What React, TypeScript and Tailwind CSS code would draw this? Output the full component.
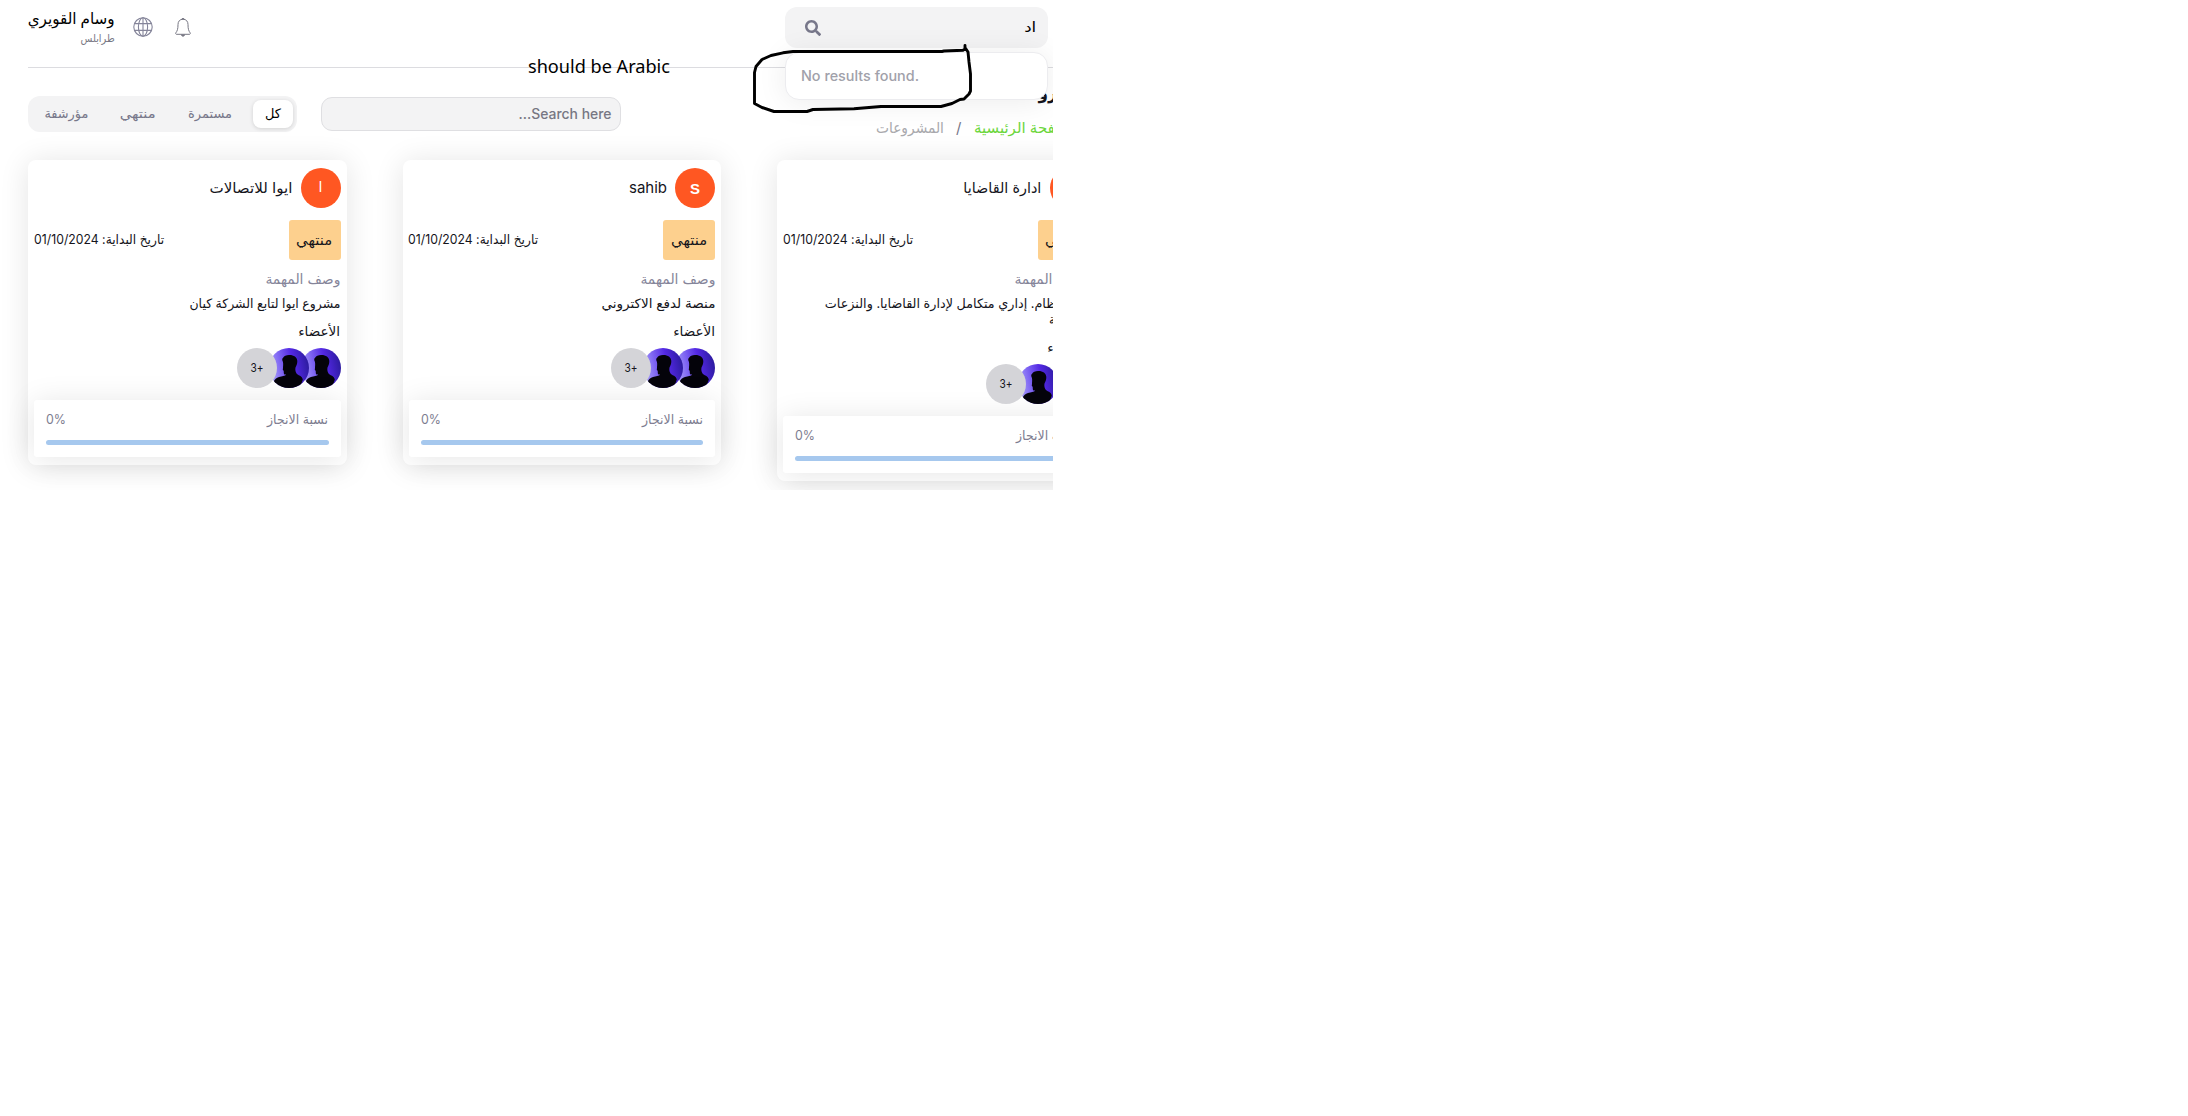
import { useLayoutEffect, useRef, useState } from "react";
import { FaSearch } from "react-icons/fa";

type FitProps = { text: string; className: string; ltr?: boolean };

/** A single line of text, condensed or widened to fill its box. */
function Fit({ text, className, ltr }: FitProps) {
  const box = useRef<HTMLSpanElement>(null);
  const line = useRef<HTMLSpanElement>(null);
  const [ratio, setRatio] = useState(1);
  useLayoutEffect(() => {
    if (box.current && line.current) {
      setRatio(box.current.clientWidth / line.current.getBoundingClientRect().width);
    }
  }, []);
  return (
    <span ref={box} dir={ltr ? "ltr" : "rtl"} className={`block shrink-0 whitespace-nowrap ${className}`}>
      <span
        ref={line}
        className={ltr ? "inline-block origin-left" : "inline-block origin-right"}
        style={{ transform: `scaleX(${ratio})` }}
      >
        {text}
      </span>
    </span>
  );
}

function Globe() {
  return (
    <svg viewBox="0 0 20 20" className="size-5 text-[#85859a]" fill="none" stroke="currentColor" strokeWidth="1.1">
      <circle cx="10" cy="10" r="9.2" />
      <ellipse cx="10" cy="10" rx="4.6" ry="9.2" />
      <path d="M10 .8v18.4M1.7 6.6h16.6M1.7 13.4h16.6" />
    </svg>
  );
}

function Bell() {
  return (
    <svg viewBox="0 0 16 19" className="h-[19px] w-4 text-[#777783]" fill="none" stroke="currentColor" strokeWidth="1">
      <path d="M8 1.2c-3.3 0-5 2.4-5 5.3 0 4.6-.7 6.4-2.2 8.4-.4.7-.1 1.4.7 1.4h13c.8 0 1.1-.7.7-1.4C13.7 12.9 13 11.1 13 6.5c0-2.9-1.7-5.3-5-5.3Z" />
      <path d="M6.8 1.4a1.2 1 0 0 1 2.4 0M6.3 17h3.4L8 18.4Z" fill="currentColor" />
    </svg>
  );
}

function Member({ id }: { id: string }) {
  return (
    <svg viewBox="0 0 40 40" className="size-10 shrink-0 rounded-full">
      <defs>
        <linearGradient id={id} x1="0" y1=".6" x2="1" y2=".4">
          <stop offset="0" stopColor="#b0a6fb" />
          <stop offset=".3" stopColor="#8068f3" />
          <stop offset=".62" stopColor="#5328e4" />
          <stop offset="1" stopColor="#2c1b9e" />
        </linearGradient>
      </defs>
      <rect width="40" height="40" fill={`url(#${id})`} />
      <path
        fill="#04030a"
        d="M13.8 13.5c-1-1.5-.6-3.3.5-3.9.6-1.6 3-2.5 5.7-2.5 4.5-.2 8.2 2 8.3 6 .1 2.5-.8 4.5-1.8 6.4-.3 1.8-.2 3.5.5 5 .8 1.8 2.3 2.5 4 3.3 1.5.8 2.3 2 2.8 3.7L31 40H8l-3.5-6c1-2.8 3-4.2 5.5-5 3-1 6-.8 7.3-2.5-1.8.3-2.5-.2-2.5-1.8l-.1-2-.9-.6.2-2.3c0-1.8.5-3.6-.2-6.3Z"
      />
    </svg>
  );
}

type Card = {
  id: string;
  title: string;
  titleWidth: string;
  initial: string;
  latin?: boolean;
  lines: { text: string; width: string }[];
};

const cards: Card[] = [
  {
    id: "a",
    title: "ايوا للاتصالات",
    titleWidth: "w-[83px]",
    initial: "ا",
    lines: [{ text: "مشروع ايوا لتابع الشركة كيان", width: "w-[151px]" }],
  },
  {
    id: "b",
    title: "sahib",
    titleWidth: "w-[38px]",
    initial: "S",
    latin: true,
    lines: [{ text: "منصة لدفع الاكتروني", width: "w-[114px]" }],
  },
  {
    id: "c",
    title: "ادارة القاضايا",
    titleWidth: "w-[78px]",
    initial: "ا",
    lines: [
      { text: "هذا نظام. إداري متكامل لإدارة القاضايا. والنزعات", width: "mr-[9px] w-[256px]" },
      { text: "القانونية", width: "w-[41px]" },
    ],
  },
];

function ProjectCard({ card }: { card: Card }) {
  return (
    <article className="flex w-[318.500px] shrink-0 flex-col rounded-lg bg-white px-1.5 py-2 text-[#15151c] shadow-[0_2px_30px_rgba(0,0,0,0.11)]">
      <div className="flex h-10 items-center justify-end gap-2">
        <Fit text={card.title} ltr={card.latin} className={`text-[15px] leading-5 ${card.titleWidth}`} />
        <span
          className={`flex size-10 items-center justify-center rounded-full bg-[#ff5722] text-white ${
            card.latin ? "pt-0.5 font-[Liberation_Sans] text-[15px] font-bold" : "pb-1 text-[14px]"
          }`}
        >
          {card.initial}
        </span>
      </div>
      <div className="mt-3 flex h-10 items-center justify-between">
        <Fit text="تاريخ البداية: 01/10/2024" className="w-[130px] pb-0.5 text-[13px] leading-5" />
        <span className="flex h-10 w-[52px] items-center justify-center rounded-[3px] bg-[#fdd08e]">
          <Fit text="منتهي" className="w-9 text-[14px] leading-5" />
        </span>
      </div>
      <div className="mt-[9px] flex flex-col items-end">
        <Fit text="وصف المهمة" className="w-[75px] text-[14px] leading-5 text-[#85859a]" />
        <div className="mt-1.5 flex flex-col items-end">
          {card.lines.map((line) => (
            <Fit key={line.text} text={line.text} className={`text-[13px] leading-4 ${line.width}`} />
          ))}
        </div>
        <Fit text="الأعضاء" className="mt-2.5 w-[42px] text-[13px] leading-5" />
      </div>
      <div className="mt-[7px] flex flex-row-reverse">
        <Member id={`${card.id}1`} />
        <span className="relative -mr-2 flex">
          <Member id={`${card.id}2`} />
        </span>
        <span className="relative -mr-2 flex size-10 items-center justify-center rounded-full bg-[#d4d4d8]">
          <Fit text="+3" className="w-[13px] text-[12px] leading-4" />
        </span>
      </div>
      <div className="mt-3 h-[57px] rounded-[3px] bg-white px-3 pt-[9px] shadow-[0_2px_30px_rgba(0,0,0,0.10)]">
        <div className="flex items-center justify-between text-[#7d7d90]">
          <Fit ltr text="0%" className="w-5 text-[13px] leading-5" />
          <Fit text="نسبة الانجاز" className="w-[61px] text-[13px] leading-5" />
        </div>
        <div className="mt-[11px] h-[5px] rounded-full bg-[#a6c8ee]" />
      </div>
    </article>
  );
}

export default function App() {
  return (
    <div className="h-[1116px] w-full overflow-hidden bg-white font-[Inter,'DejaVu_Sans',sans-serif]">
      <div className="relative h-[490px] w-[1053px] overflow-hidden">
        <div className="w-[1123px] px-7">
          <header className="flex h-[68px] items-start border-b border-[#dcdce0] pt-[7px]">
            <div className="-mt-px flex flex-col items-end">
              <Fit text="وسام القويري" className="w-[87px] text-[16px] leading-6 font-medium text-black" />
              <Fit text="طرابلس" className="w-[34px] text-[11px] leading-4 text-[#777783]" />
            </div>
            <div className="mt-2.5 ml-[18px] flex items-center gap-[22px]">
              <Globe />
              <Bell />
            </div>
            <div className="relative mr-[47px] ml-auto h-[41px] w-[263px] rounded-xl bg-[#f3f3f4]">
              <div className="flex h-full items-center justify-between pr-3 pl-5">
                <FaSearch className="size-4 text-[#77778a]" />
                <Fit text="اد" className="w-3 pb-0.5 text-[14px] leading-5 text-black" />
              </div>
              <div className="absolute top-[45px] left-0 z-10 flex h-12 w-full items-center rounded-[14px] border border-[#ececef] bg-white pl-[15px] shadow-[0_2px_30px_rgba(0,0,0,0.08)]">
                <Fit ltr text="No results found." className="w-[118px] text-[14px] leading-5 font-medium text-[#a1a1aa]" />
              </div>
            </div>
          </header>

          <div className="flex h-[92px] items-start">
            <nav className="mt-7 flex h-9 w-[269px] items-center rounded-xl bg-[#f3f3f4] text-[13px] text-[#77778a]">
              <Fit text="مؤرشفة" className="ml-4 w-11 pb-0.5 leading-5" />
              <Fit text="منتهي" className="ml-8 w-9 pb-0.5 leading-5" />
              <Fit text="مستمرة" className="ml-8 w-11 pb-0.5 leading-5" />
              <span className="ml-[21px] flex h-7 w-10 items-center justify-center rounded-lg bg-white text-black shadow-[0_1px_4px_rgba(0,0,0,0.14)]">
                <Fit text="كل" className="w-4 pb-0.5 leading-5" />
              </span>
            </nav>
            <div className="mt-[29px] ml-6 flex h-[34px] w-[300px] items-center justify-end rounded-[11px] border border-[#dfdfe2] bg-[#f3f3f4] pr-2">
              <Fit text="Search here..." className="w-[93px] text-[14px] leading-5 font-medium text-[#777783]" />
            </div>
            <div className="mt-[11px] mr-[18px] ml-auto flex flex-col items-end">
              <Fit text="المشروعات" className="-mr-[17px] w-[86px] text-[19px] leading-7 font-bold text-[#15151c]" />
              <div className="mt-[11px] flex items-center text-[15px] leading-5">
                <Fit text="المشروعات" className="w-[68px] text-[#a9a9ad]" />
                <span className="ml-3 w-[6px] text-[#77778a]">/</span>
                <Fit text="الصفحة الرئيسية" className="ml-3 w-[103px] text-[#6cd63c]" />
              </div>
            </div>
          </div>

          <main className="flex items-start gap-14">
            {cards.map((card) => (
              <ProjectCard key={card.id} card={card} />
            ))}
          </main>
        </div>

        <Fit
          ltr
          text="should be Arabic"
          className="absolute top-[54px] left-[528px] w-[142px] font-['Noto_Sans'] text-[18px] leading-6 text-black"
        />
        <svg
          viewBox="740 40 240 76"
          className="absolute top-10 left-[740px] z-20 h-[76px] w-60"
          fill="none"
          stroke="#000"
          strokeWidth="2.9"
          strokeLinecap="round"
          strokeLinejoin="round"
        >
          <path d="M965 45.5V49L963 50.2L944 51L942 51.5H793L783 52.8L771 55.5L762 59.5L756 66.5L754.5 72.5V103.5L762 107.500L774 111.500H807L813 109.500L854 108.800L881 106.500H941L952 103.500L960 99.500L964 99L969 94L970.500 91V74L969 62L968 52L965 47.500" />
        </svg>
      </div>
    </div>
  );
}
